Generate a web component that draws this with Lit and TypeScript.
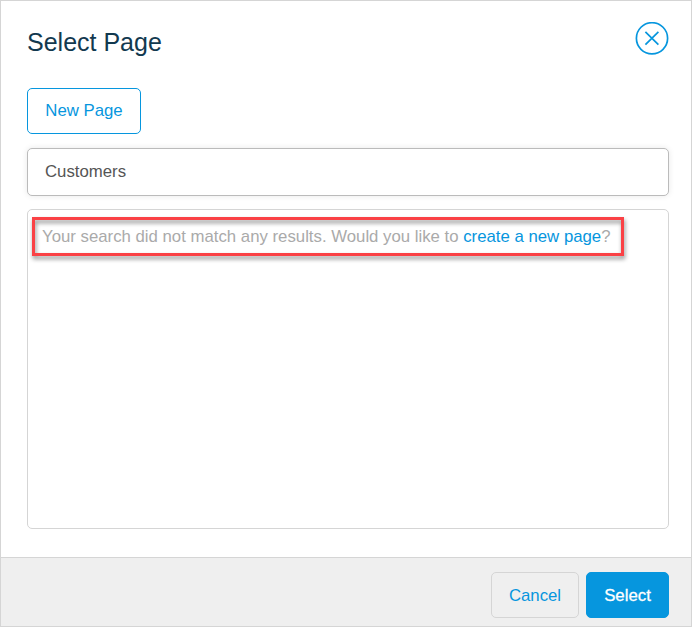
import { LitElement, html, css } from "lit";
import { customElement, state } from "lit/decorators.js";

@customElement("app-root")
export class AppRoot extends LitElement {
  static styles = css`
    :host {
      display: block;
      height: 627px;
      font: 16.77px/20px "Liberation Sans", Arial, sans-serif;
      color: #555;
    }
    * { box-sizing: border-box; }
    .dialog {
      display: flex;
      flex-direction: column;
      height: 100%;
      border: 1px solid #d5d5d5;
      background: #fff;
    }
    .body {
      flex: 1;
      display: flex;
      flex-direction: column;
      padding: 21px 22px 28px 26px;
    }
    header {
      display: flex;
      justify-content: space-between;
      height: 66px;
    }
    h1 {
      margin: 4px 0 0;
      font-size: 25px;
      line-height: 32px;
      font-weight: 400;
      color: #12394f;
    }
    button {
      font: inherit;
      height: 46px;
      padding: 0;
      border: 1px solid #0696de;
      border-radius: 5px;
      background: transparent;
      color: #0696de;
    }
    .close {
      width: 34px;
      height: 34px;
      border: 0;
    }
    .close svg { display: block; }
    .new { width: 114px; }
    input {
      font: inherit;
      color: #555;
      height: 48px;
      margin: 14px 0 13px;
      padding: 0 17px;
      border: 1px solid #bbb;
      border-radius: 5px;
      outline: 0;
      box-shadow: 0 0 6px rgba(0, 0, 0, 0.09);
      background: #fff;
    }
    .body > .new, .body > input, .results { flex-shrink: 0; }
    .body > input, .results { width: 642px; }
    .results {
      height: 320px;
      padding: 7px 4px;
      border: 1px solid #d5d5d5;
      border-radius: 5px;
    }
    .frame {
      position: relative;
      width: 592px;
      height: 39px;
      padding: 10px 0 0 10px;
      color: #aaa;
      white-space: nowrap;
    }
    .frame::before {
      content: "";
      position: absolute;
      inset: 0;
      border: 3px solid #fa4145;
      filter: drop-shadow(1px 3px 2px rgba(0, 0, 0, 0.45));
      pointer-events: none;
    }
    .frame p { margin: 0; position: relative; }
    a { color: #0696de; text-decoration: none; }
    footer {
      display: flex;
      justify-content: flex-end;
      gap: 7px;
      height: 69px;
      padding: 14px 22px 0 0;
      border-top: 1px solid #d5d5d5;
      background: #efefef;
    }
    footer button { padding-top: 2px; }
    .cancel { width: 88px; border-color: #d5d5d5; }
    .select {
      width: 83px;
      background: #0696de;
      color: #fff;
      -webkit-text-stroke: 0.3px #fff;
    }
  `;

  @state() private query = "Customers";

  render() {
    return html`
      <section class="dialog">
        <div class="body">
          <header>
            <h1>Select Page</h1>
            <button class="close" aria-label="Close">
              <svg width="34" height="34" viewBox="0 0 34 34" fill="none" stroke="#0696de" stroke-width="1.7">
                <circle cx="17" cy="16.3" r="15.6" />
                <path d="M10.4 9.9 23.4 22.7M23.4 9.9 10.4 22.7" />
              </svg>
            </button>
          </header>
          <button class="new">New Page</button>
          <input
            .value=${this.query}
            @input=${(e: Event) => (this.query = (e.target as HTMLInputElement).value)}
          />
          <div class="results">
            <div class="frame">
              <p>Your search did not match any results. Would you like to <a href="#">create a new page</a>?</p>
            </div>
          </div>
        </div>
        <footer>
          <button class="cancel">Cancel</button>
          <button class="select">Select</button>
        </footer>
      </section>
    `;
  }
}
